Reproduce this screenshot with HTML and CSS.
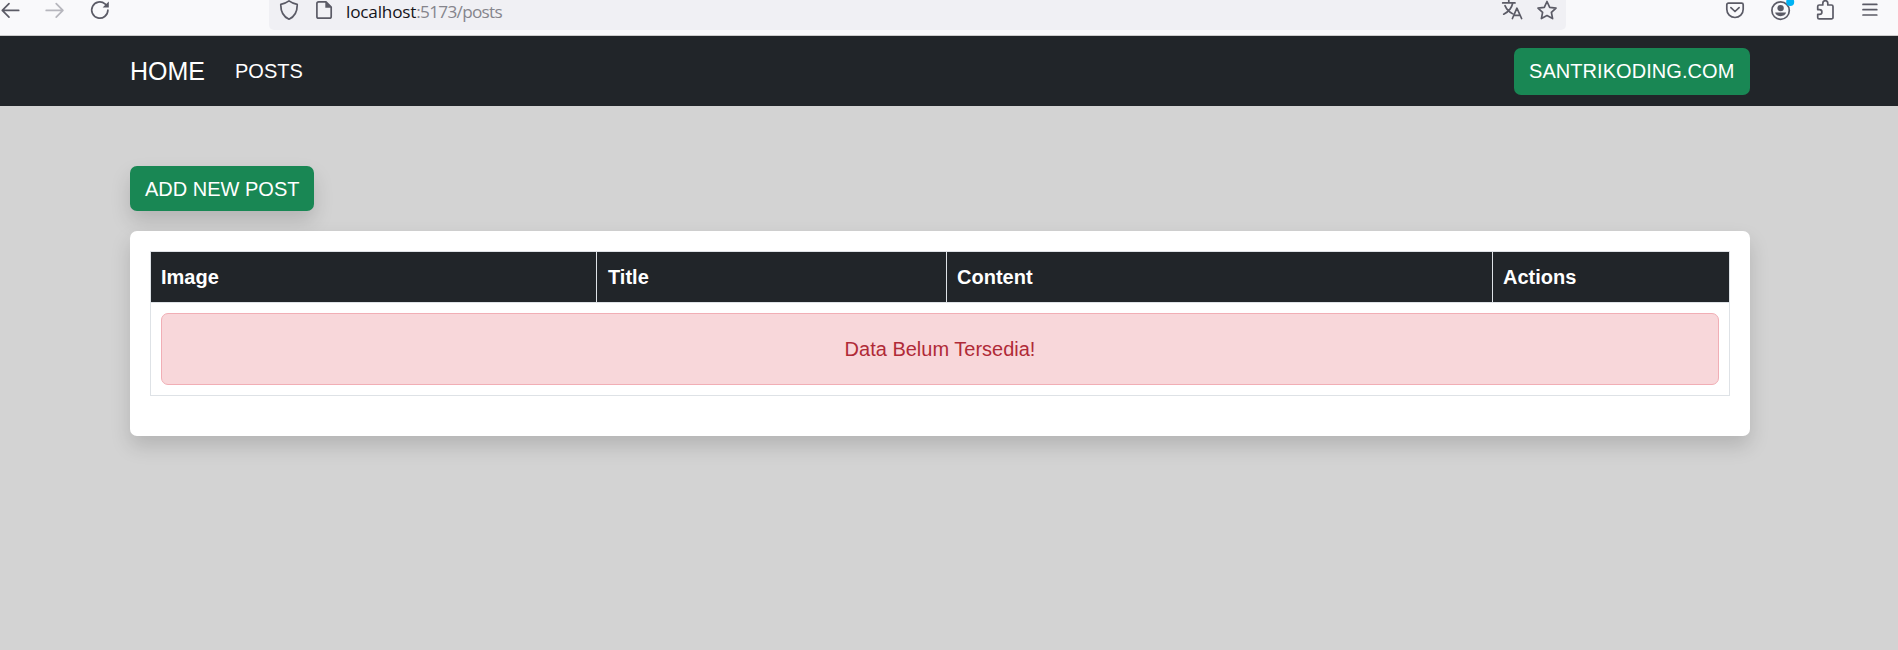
FILE: index.html
```html
<!DOCTYPE html>
<html lang="id">
<head>
<meta charset="utf-8">
<title>Posts</title>
<link rel="stylesheet" href="styles.css">
</head>
<body>
<div class="browser-bar">
  <div class="nav-icons">
    <svg class="icon" viewBox="0 0 24 24"><path d="M18.7 10.4H2.4M9 3.7L2.3 10.4 9 17.1"/></svg>
    <svg class="icon disabled" viewBox="0 0 24 24"><path d="M2.2 10.4h16.5M12.2 3.7l6.7 6.7-6.7 6.7"/></svg>
    <svg class="icon" viewBox="0 0 24 24"><path d="M19.9 10.2A8.1 8.1 0 1 1 17 3.8l2 2"/><path class="fill" d="M20.8 1.4v6.2h-6.2z"/></svg>
  </div>
  <div class="url-field">
    <svg class="icon" viewBox="0 0 24 24"><path d="M12 .9c2.5 1.9 5.3 2.9 8.2 3.4.2 6.7-2.3 12.3-8.2 14.9C6.100 16.600 3.600 11 3.800 4.300 6.700 3.800 9.500 2.800 12 .9z"/></svg>
    <svg class="icon doc" viewBox="0 0 24 24"><path d="M6.700 1.800h7.300l5.200 5.200v9.400a1.800 1.800 0 0 1-1.800 1.800H6.700a1.800 1.800 0 0 1-1.800-1.800V3.600a1.800 1.800 0 0 1 1.800-1.800z"/><path class="fill" d="M13.300 1.500V7.700h6.200z"/></svg>
    <div class="url"><span class="host">localhost</span>:5173/posts</div>
    <svg class="icon" viewBox="0 0 24 24"><path d="M2.700 2.900H15M8.800 0v2.900M5 5.700c1.600 3.800 4.400 6.600 7.600 8M12.700 3.300C11.600 8.200 8.500 12 3.700 14.200M12.400 18.500l4.500-10.300 4.700 10.300M13.900 15.400h6.200"/></svg>
    <svg class="icon star" viewBox="0 0 24 24"><path d="M12 1.500l2.700 5.800 6.300.8-4.600 4.300 1.200 6.200-5.600-3-5.600 3 1.200-6.200L3 8.100l6.300-.8z"/></svg>
  </div>
  <div class="tool-icons">
    <svg class="icon" viewBox="0 0 24 24"><path d="M5.400 3.200h13.200a1.600 1.600 0 0 1 1.600 1.600v4.500a8.200 8.200 0 0 1-16.400 0V4.800a1.600 1.600 0 0 1 1.600-1.600z"/><path d="M7.900 7.600l4.100 3.900 4.100-3.900"/></svg>
    <svg class="icon" viewBox="-.6 0 24 24"><circle cx="12" cy="10.600" r="8.700"/><circle class="fill" cx="12" cy="8.100" r="3.200"/><path class="fill" d="M6.500 12.600h11c-.6 2.200-2.700 3.600-5.500 3.600s-4.900-1.400-5.500-3.600z"/><circle class="dot" cx="21.600" cy="2" r="4"/></svg>
    <svg class="icon" viewBox="-.7 0 24 24"><path d="M5.500 18.900h12.300a1.500 1.500 0 0 0 1.500-1.500V6.500A1.500 1.500 0 0 0 17.800 5h-3.700V3.200a2.500 2.500 0 0 0-5 0V5H5.500A1.500 1.500 0 0 0 4 6.500v3.100h1.800a2.400 2.400 0 0 1 0 4.800H4v3a1.500 1.500 0 0 0 1.500 1.500z"/></svg>
    <svg class="icon" viewBox="0 0 24 24"><path d="M5 4.400h13.800M5 9.700h13.800M5 15h13.800"/></svg>
  </div>
</div>
<nav class="navbar">
  <div class="container navbar-inner">
    <a class="brand">HOME</a>
    <a class="nav-link">POSTS</a>
    <a class="btn btn-site">SANTRIKODING.COM</a>
  </div>
</nav>
<main class="container content">
  <a class="btn shadow">ADD NEW POST</a>
  <div class="card shadow">
    <table class="table">
      <colgroup><col class="col-image"><col class="col-title"><col class="col-content"><col></colgroup>
      <thead><tr><th>Image</th><th class="title-head">Title</th><th>Content</th><th>Actions</th></tr></thead>
      <tbody><tr><td colspan="4"><div class="alert">Data Belum Tersedia!</div></td></tr></tbody>
    </table>
  </div>
</main>
</body>
</html>
```
FILE: styles.css
```css
* { box-sizing: border-box; }
body {
  margin: 0;
  height: 650px;
  overflow: hidden;
  background: #d3d3d3;
  font: 20px/30px "Liberation Sans", Arial, sans-serif;
}
.browser-bar {
  display: flex;
  height: 36px;
  background: #f9f9fb;
  border-bottom: 1px solid #ccc;
}
.icon {
  flex: none;
  width: 24px;
  height: 24px;
  overflow: visible;
  fill: none;
  stroke: #5b5b66;
  stroke-width: 1.7;
  stroke-linecap: round;
  stroke-linejoin: round;
}
.icon .fill { fill: #5b5b66; stroke: none; }
.icon .dot { fill: #00b3f4; stroke: none; }
.disabled { opacity: .42; }
.nav-icons { display: flex; gap: 20px; width: 269px; }
.url-field {
  display: flex;
  width: 1297px;
  height: 30px;
  padding: 0 7px 0 8px;
  background: #f0f0f4;
  border-radius: 0 0 5px 5px;
}
.doc { margin-left: 11px; }
.url {
  flex: 1;
  padding-left: 10px;
  font: 17.2px/23px "Open Sans", "Noto Sans", sans-serif;
  letter-spacing: -.7px;
  color: #85858c;
}
.host { color: #15141a; letter-spacing: -.2px; }
.star { margin-left: 11px; }
.tool-icons { display: flex; gap: 21px; margin-left: 157px; }
.container { width: 1620px; margin-left: 130px; }
.navbar { height: 70px; background: #212529; color: #fff; }
.navbar-inner { display: flex; align-items: center; height: 100%; }
.brand { font-size: 25px; margin-right: 30px; }
.btn {
  display: inline-block;
  height: 45px;
  padding: 8px 15px 7px;
  border-radius: 7px;
  background: #198754;
  color: #fff;
}
.btn-site {
  width: 236px;
  height: 47px;
  padding: 8px 15px;
  margin-left: auto;
  letter-spacing: .06px;
}
.content { padding-top: 60px; }
.content > .btn { display: block; width: 184px; white-space: nowrap; }
.shadow { box-shadow: 0 10px 20px rgba(0, 0, 0, .15); }
.card {
  height: 205px;
  margin-top: 20px;
  padding: 20px;
  background: #fff;
  border-radius: 7px;
}
.table {
  width: 1580px;
  table-layout: fixed;
  border-collapse: collapse;
  border: 1px solid #dee2e6;
}
.col-image { width: 446px; }
.col-title { width: 350px; }
.col-content { width: 546px; }
.table th {
  height: 51px;
  padding: 0 10px;
  border: 1px solid #dee2e6;
  background: #212529;
  color: #fff;
  text-align: left;
}
.table .title-head { padding-left: 11px; }
.table td { padding: 10px; border: 1px solid #dee2e6; }
.alert {
  height: 72px;
  padding: 20px;
  border: 1px solid #f1aeb5;
  border-radius: 7px;
  background: #f8d7da;
  color: #b02a37;
  text-align: center;
}
```
